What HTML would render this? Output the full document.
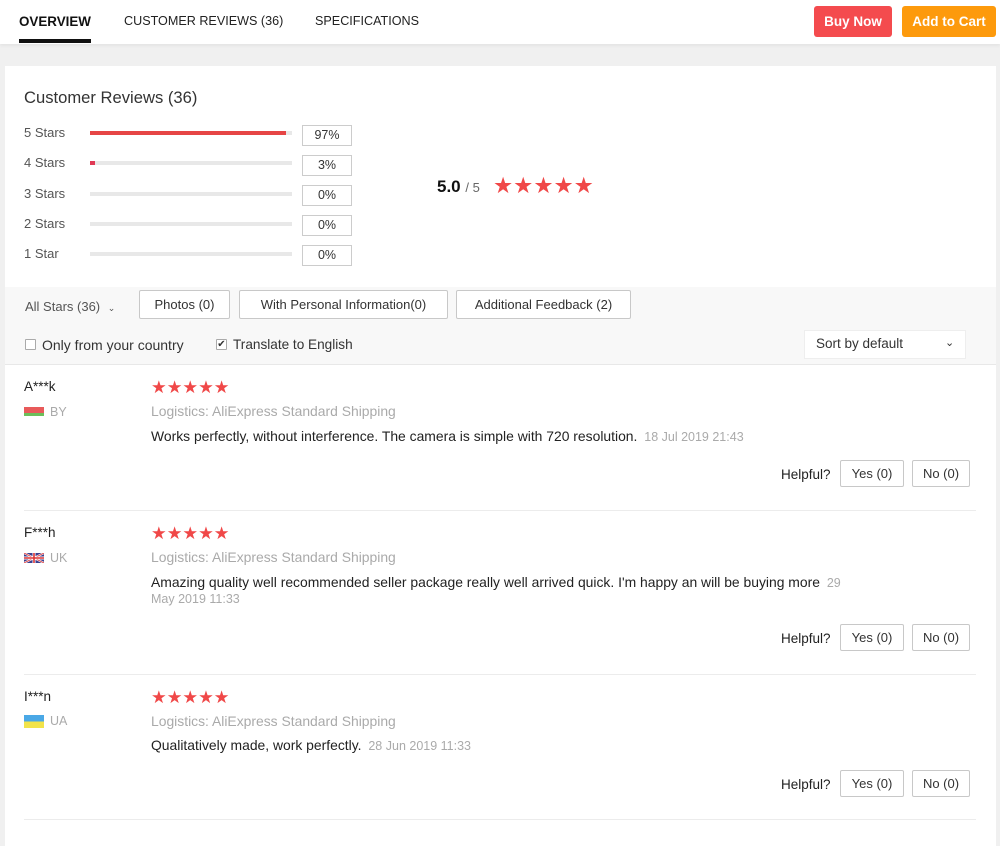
<!DOCTYPE html>
<html><head><meta charset="utf-8"><style>
*{box-sizing:border-box;margin:0;padding:0}
body{width:1000px;height:835px;overflow:hidden;background:#f0f0f0;font-family:"Liberation Sans",sans-serif;color:#333;position:relative}
.a{position:absolute;white-space:nowrap}
.top{position:absolute;left:0;top:0;width:1000px;height:44px;background:#fff;box-shadow:0 2px 3px rgba(0,0,0,.05)}
.card{position:absolute;left:5px;top:66px;width:991px;height:780px;background:#fff}
.btn{position:absolute;border:1px solid #c8c8c8;border-radius:2px;background:#fff;font-size:13px;color:#333;text-align:center}
.bar{position:absolute;left:90px;width:202px;height:4px;background:#e8e8e8}
.pct{position:absolute;left:302px;width:50px;height:21px;border:1px solid #ccc;font-size:12.5px;text-align:center;line-height:19px;color:#333}
.star{color:#f04848;font-size:17px;letter-spacing:0px}
.lbl{font-size:13px;color:#555}
.hr{position:absolute;left:24px;width:952px;height:1px;background:#ececec}
.rt{font-size:13.9px}
</style></head><body>
<div class="top">
 <div class="a" style="left:19px;top:14px;font-size:13.4px;font-weight:bold;color:#111">OVERVIEW</div>
 <div style="position:absolute;left:19px;top:39px;width:72px;height:4px;background:#111"></div>
 <div class="a" style="left:124px;top:14px;font-size:12.6px;color:#222">CUSTOMER REVIEWS (36)</div>
 <div class="a" style="left:315px;top:14px;font-size:12.6px;color:#222">SPECIFICATIONS</div>
 <div class="a" style="left:814px;top:6px;width:78px;height:31px;background:#f44b4e;border-radius:3px;color:#fff;font-size:13.5px;font-weight:bold;text-align:center;line-height:31px">Buy Now</div>
 <div class="a" style="left:902px;top:6px;width:94px;height:31px;background:#fd9a0c;border-radius:3px;color:#fff;font-size:13.5px;font-weight:bold;text-align:center;line-height:31px">Add to Cart</div>
</div>
<div class="card"></div>
<div class="a" style="left:24px;top:88px;font-size:16.6px;color:#333">Customer Reviews (36)</div>

<div class="a lbl" style="left:24px;top:125px">5 Stars</div>
<div class="bar" style="top:131px"><div style="width:196px;height:4px;background:#e64545"></div></div>
<div class="pct" style="top:125px">97%</div>
<div class="a lbl" style="left:24px;top:155px">4 Stars</div>
<div class="bar" style="top:161px"><div style="width:5px;height:4px;background:#e03a55"></div></div>
<div class="pct" style="top:155px">3%</div>
<div class="a lbl" style="left:24px;top:186px">3 Stars</div>
<div class="bar" style="top:192px"></div>
<div class="pct" style="top:185px">0%</div>
<div class="a lbl" style="left:24px;top:216px">2 Stars</div>
<div class="bar" style="top:222px"></div>
<div class="pct" style="top:215px">0%</div>
<div class="a lbl" style="left:24px;top:246px">1 Star</div>
<div class="bar" style="top:252px"></div>
<div class="pct" style="top:245px">0%</div>

<div class="a" style="left:437px;top:177px;font-size:17px;font-weight:bold;color:#111">5.0 <span style="font-weight:normal;font-size:13px;color:#666">/ 5</span></div>
<div class="a star" style="left:493px;top:173px;font-size:22.5px">★★★★★</div>

<div style="position:absolute;left:5px;top:287px;width:991px;height:78px;background:#f8f8f8;border-bottom:1px solid #e8e8e8"></div>
<div class="a" style="left:25px;top:299px;font-size:13px;color:#555">All Stars (36) <span style="font-size:9px;margin-left:4px">&#8964;</span></div>
<div class="btn" style="left:139px;top:290px;width:91px;height:29px;line-height:27px">Photos (0)</div>
<div class="btn" style="left:239px;top:290px;width:209px;height:29px;line-height:27px">With Personal Information(0)</div>
<div class="btn" style="left:456px;top:290px;width:175px;height:29px;line-height:27px">Additional Feedback (2)</div>
<div style="position:absolute;left:25px;top:339px;width:11px;height:11px;border:1px solid #aaa;background:#fff;border-radius:1px"></div>
<div class="a" style="left:42px;top:337px;font-size:14px;color:#333">Only from your country</div>
<div style="position:absolute;left:216px;top:339px;width:11px;height:11px;border:1px solid #aaa;background:#fff;border-radius:1px;font-size:10px;line-height:9px;text-align:center;color:#333">✔</div>
<div class="a" style="left:233px;top:337px;font-size:13.6px;color:#333">Translate to English</div>
<div style="position:absolute;left:804px;top:330px;width:162px;height:29px;background:#fff;border:1px solid #eee"></div>
<div class="a" style="left:816px;top:336px;font-size:13.5px;color:#333">Sort by default</div>
<div class="a" style="left:945px;top:336px;font-size:11px;color:#333">&#8964;</div>

<!-- review 1 -->
<div class="a" style="left:24px;top:379px;font-size:13.5px;color:#222">A***k</div>
<div style="position:absolute;left:24px;top:407px;width:20px;height:9px;background:linear-gradient(#e85a5a 66%,#6bbf5a 66%)"></div>
<div class="a" style="left:50px;top:405px;font-size:12.5px;color:#aaa">BY</div>
<div class="a star" style="left:151px;top:377px;font-size:17.5px">★★★★★</div>
<div class="a rt" style="left:151px;top:403px;color:#aaa">Logistics: AliExpress Standard Shipping</div>
<div class="a rt" style="left:151px;top:428px;color:#222">Works perfectly, without interference. The camera is simple with 720 resolution. <span style="font-size:12.5px;color:#aaa;margin-left:3px">18 Jul 2019 21:43</span></div>
<div class="a" style="left:781px;top:467px;font-size:13.5px;color:#222">Helpful?</div>
<div class="btn" style="left:840px;top:460px;width:64px;height:27px;line-height:25px">Yes (0)</div>
<div class="btn" style="left:912px;top:460px;width:58px;height:27px;line-height:25px">No (0)</div>
<div class="hr" style="top:510px"></div>

<!-- review 2 -->
<div class="a" style="left:24px;top:525px;font-size:13.5px;color:#222">F***h</div>
<svg style="position:absolute;left:24px;top:553px" width="20" height="10" viewBox="0 0 20 10"><rect width="20" height="10" fill="#3b3f8f"/><path d="M0 0L20 10M20 0L0 10" stroke="#fff" stroke-width="2"/><path d="M0 0L20 10M20 0L0 10" stroke="#d33" stroke-width=".8"/><path d="M10 0V10M0 5H20" stroke="#fff" stroke-width="3"/><path d="M10 0V10M0 5H20" stroke="#d33" stroke-width="1.6"/></svg>
<div class="a" style="left:50px;top:551px;font-size:12.5px;color:#aaa">UK</div>
<div class="a star" style="left:151px;top:523px;font-size:17.5px">★★★★★</div>
<div class="a rt" style="left:151px;top:549px;color:#aaa">Logistics: AliExpress Standard Shipping</div>
<div class="a rt" style="left:151px;top:574px;color:#222">Amazing quality well recommended seller package really well arrived quick. I'm happy an will be buying more <span style="font-size:12.5px;color:#aaa;margin-left:3px">29</span></div>
<div class="a" style="left:151px;top:592px;font-size:12.5px;color:#aaa">May 2019 11:33</div>
<div class="a" style="left:781px;top:631px;font-size:13.5px;color:#222">Helpful?</div>
<div class="btn" style="left:840px;top:624px;width:64px;height:27px;line-height:25px">Yes (0)</div>
<div class="btn" style="left:912px;top:624px;width:58px;height:27px;line-height:25px">No (0)</div>
<div class="hr" style="top:674px"></div>

<!-- review 3 -->
<div class="a" style="left:24px;top:689px;font-size:13.5px;color:#222">I***n</div>
<div style="position:absolute;left:24px;top:715px;width:20px;height:13px;background:linear-gradient(#4aa8e6 50%,#f2e34a 50%)"></div>
<div class="a" style="left:50px;top:714px;font-size:12.5px;color:#aaa">UA</div>
<div class="a star" style="left:151px;top:687px;font-size:17.5px">★★★★★</div>
<div class="a rt" style="left:151px;top:713px;color:#aaa">Logistics: AliExpress Standard Shipping</div>
<div class="a rt" style="left:151px;top:737px;color:#222">Qualitatively made, work perfectly. <span style="font-size:12.5px;color:#aaa;margin-left:3px">28 Jun 2019 11:33</span></div>
<div class="a" style="left:781px;top:777px;font-size:13.5px;color:#222">Helpful?</div>
<div class="btn" style="left:840px;top:770px;width:64px;height:27px;line-height:25px">Yes (0)</div>
<div class="btn" style="left:912px;top:770px;width:58px;height:27px;line-height:25px">No (0)</div>
<div class="hr" style="top:819px"></div>
</body></html>
